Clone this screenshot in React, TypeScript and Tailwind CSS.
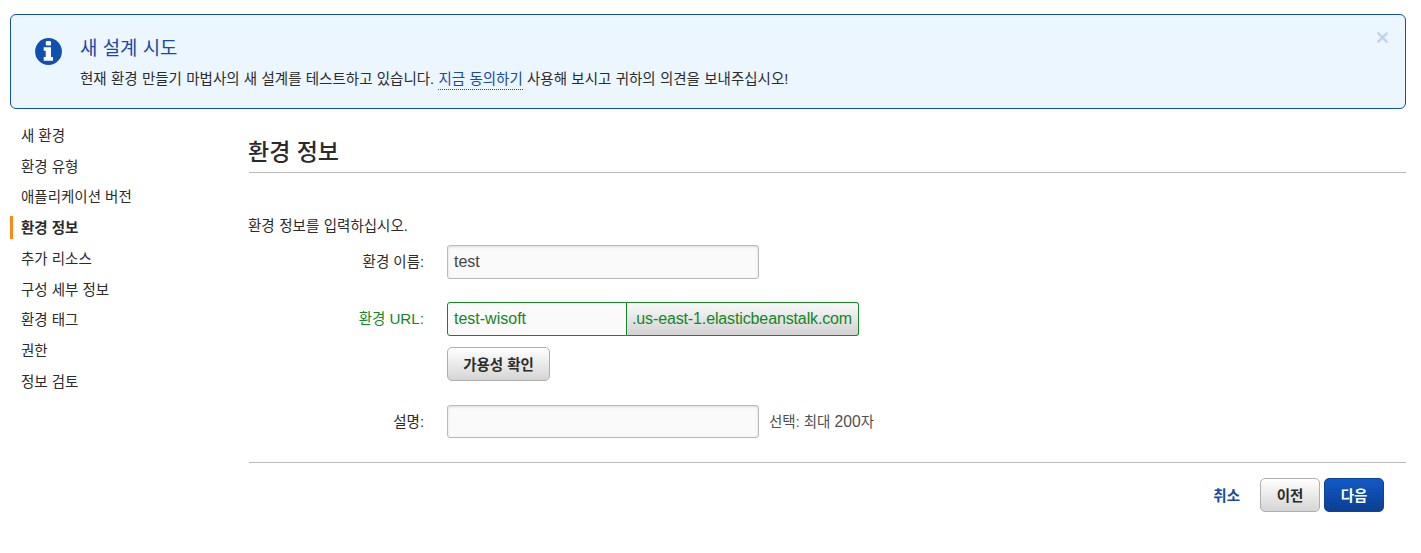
import type { ReactNode } from "react";

const steps = [
  "새 환경",
  "환경 유형",
  "애플리케이션 버전",
  "환경 정보",
  "추가 리소스",
  "구성 세부 정보",
  "환경 태그",
  "권한",
  "정보 검토",
];
const activeStep = 3;

function InfoIcon() {
  return (
    <svg viewBox="0 0 27 27" className="h-[27px] w-[27px] shrink-0">
      <circle cx="13.5" cy="13.5" r="13.4" fill="#1150af" />
      <rect x="10.8" y="3" width="5.2" height="4.6" rx="1.2" fill="#fff" />
      <path d="M8.7 9.3h7.3V19H18v3.7H8.7V19h2v-6.2h-2z" fill="#fff" />
    </svg>
  );
}

function CloseIcon() {
  return (
    <svg viewBox="0 0 11 11" className="h-[11px] w-[11px]">
      <path d="M1.3 1.3l8.4 8.4M9.7 1.3L1.3 9.7" stroke="#bfd3ef" strokeWidth="2.4" strokeLinecap="round" />
    </svg>
  );
}

function Notice() {
  return (
    <section className="flex h-[95px] rounded-[6px] border border-[#1150af] bg-[#ebf6ff] pt-[21px] pl-6">
      <div className="mt-[2px]">
        <InfoIcon />
      </div>
      <div className="ml-[18px] flex-1">
        <h2 className="pt-px text-[18.9px] leading-6 text-[#1848a8]">새 설계 시도</h2>
        <p className="mt-[6px] leading-6 [word-spacing:0.25px]">
          현재 환경 만들기 마법사의 새 설계를 테스트하고 있습니다.{" "}
          <a className="border-b border-dotted border-[#1848a8] pb-[2px] text-[#1848a8]">지금 동의하기</a> 사용해 보시고 귀하의 의견을
          보내주십시오!
        </p>
      </div>
      <button className="mt-[-4px] mr-[17px] h-[11px]" aria-label="닫기">
        <CloseIcon />
      </button>
    </section>
  );
}

function Sidebar() {
  return (
    <nav className="w-[238px] shrink-0 pt-[14.75px]">
      <ul className="flex flex-col gap-[7.75px]">
        {steps.map((step, i) => (
          <li
            key={step}
            className={
              i === activeStep
                ? "h-[23px] border-l-[3px] border-[#ff8a12] pl-2 leading-[24px] font-bold"
                : "h-[23px] pl-[11px] leading-[24.5px]"
            }
          >
            {step}
          </li>
        ))}
      </ul>
    </nav>
  );
}

function Row({ label, className, children }: { label: ReactNode; className: string; children: ReactNode }) {
  return (
    <div className={`flex ${className}`}>
      <label className="mr-[23px] w-[175px] text-right leading-[34px]">{label}</label>
      {children}
    </div>
  );
}

const field = "border bg-[#fafafa] px-[6px] text-[16px] outline-none";

export default function App() {
  return (
    <main className="h-[553px] w-full overflow-hidden bg-white pt-[14px] pr-[15px] pl-[10px] font-['Liberation_Sans','Noto_Sans_CJK_KR',sans-serif] text-[14.5px] text-[#2b2b2b]">
      <Notice />
      <div className="flex">
        <Sidebar />
        <div className="flex-1 pl-px">
          <h1 className="mt-[27px] h-[37px] border-b border-[#bababa] text-[23px] leading-[32px] font-medium">
            <span className="-ml-px">환경 정보</span>
          </h1>
          <p className="mt-[41px] -ml-px leading-6 [word-spacing:0.5px]">환경 정보를 입력하십시오.</p>

          <Row label="환경 이름:" className="mt-[7px] h-[34px]">
            <input
              defaultValue="test"
              className={`${field} h-[34px] w-[312px] rounded-[3px] border-[#bababa] text-[#444] shadow-[inset_0_1px_3px_rgba(0,0,0,0.12)]`}
            />
          </Row>

          <Row
            label={
              <span className="text-[#128724]">
                환경 <span className="text-[15.2px]">URL:</span>
              </span>
            }
            className="mt-[23px] h-[34px]"
          >
            <div className="flex h-[34px] w-[412px] text-[#128724]">
              <input defaultValue="test-wisoft" className={`${field} w-[180px] rounded-l-[3px] border-[#128724]`} />
              <span className="flex-1 rounded-r-[3px] border border-l-0 border-[#128724] bg-linear-to-b from-[#fafafa] to-[#d2d2d2] pl-[5px] text-[16px] leading-[32px] tracking-[-0.13px] whitespace-nowrap">
                .us-east-1.elasticbeanstalk.com
              </span>
            </div>
          </Row>

          <button className="mt-[11px] ml-[198px] block h-[34px] w-[103px] rounded-[5px] border border-[#aeaeae] bg-linear-to-b from-white to-[#d5d5d5] pt-[3px] font-bold">
            가용성 확인
          </button>

          <Row label="설명:" className="mt-[24px] h-[33px]">
            <input
              className={`${field} h-[33px] w-[312px] rounded-[3px] border-[#bababa] shadow-[inset_0_1px_3px_rgba(0,0,0,0.12)]`}
            />
            <span className="ml-[10px] leading-[33px] text-[#505050]">
              선택: 최대 <span className="text-[15.7px]">200</span>자
            </span>
          </Row>

          <footer className="mt-[24px] flex justify-end border-t border-[#bababa] pt-[15px] pr-[22px] font-bold">
            <a className="mr-5 leading-[36px] text-[#1848a8]">취소</a>
            <button className="mr-1 h-[34px] w-[60px] rounded-[5px] border border-[#aeaeae] bg-linear-to-b from-white to-[#d5d5d5] pt-[3px]">
              이전
            </button>
            <button className="h-[34px] w-[60px] rounded-[5px] border border-[#0b4396] bg-linear-to-b from-[#1259c7] to-[#0a3f93] pt-[3px] text-white">
              다음
            </button>
          </footer>
        </div>
      </div>
    </main>
  );
}
